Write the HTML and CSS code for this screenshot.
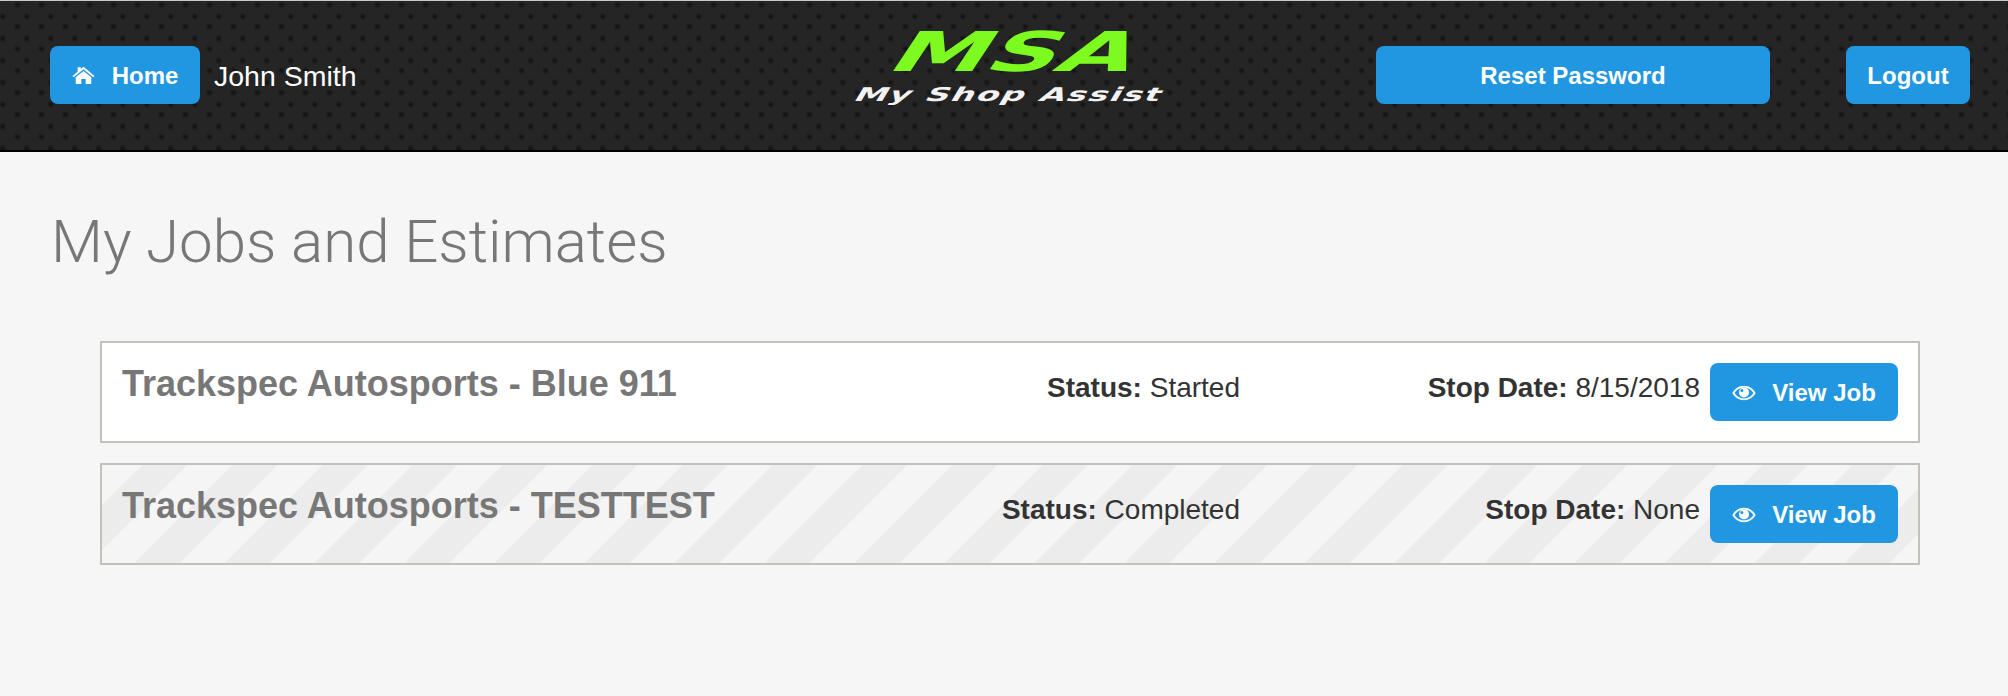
FILE: index.html
```html
<!DOCTYPE html>
<html lang="en">
<head>
<meta charset="utf-8">
<title>My Jobs and Estimates</title>
<link rel="stylesheet" href="styles.css">
</head>
<body>
<header class="topbar">
  <div class="topbar-left">
    <a class="btn btn-home"><svg class="icon icon-home" viewBox="0 0 24 20"><path d="M12 5.200 3.800 11.900V18.100a.9.9 0 0 0 .9.9H9.700v-5.400h4.600v5.400h5a.9.9 0 0 0 .9-.9V11.900z"/><path d="M12 .8 9.200 3.100V1.400H5.900v4.500L.4 10.400l1.300 1.500L12 3.400l10.300 8.500 1.300-1.500z"/></svg>Home</a>
    <span class="user">John Smith</span>
  </div>
  <div class="logo">
    <div class="logo-main">MSA</div>
    <div class="logo-sub">My Shop Assist</div>
  </div>
  <div class="topbar-right">
    <a class="btn btn-reset">Reset Password</a>
    <a class="btn btn-logout">Logout</a>
  </div>
</header>
<main class="content">
  <h1 class="page-title">My Jobs and Estimates</h1>
  <section class="jobs">
    <article class="job">
      <h2 class="job-name">Trackspec Autosports - Blue 911</h2>
      <div class="job-status"><b>Status:</b> Started</div>
      <div class="job-date"><b>Stop Date:</b> 8/15/2018</div>
      <a class="btn btn-view"><svg class="icon icon-eye" viewBox="0 0 24 16"><path fill-rule="evenodd" d="M12 .8C7 .8 2.800 3.600.3 8c2.500 4.400 6.700 7.200 11.700 7.200s9.200-2.800 11.700-7.200C21.200 3.600 17 .8 12 .8zM12 2.600c3.900 0 7.300 2.100 9.500 5.400-2.200 3.300-5.600 5.400-9.500 5.400S4.700 11.300 2.500 8C4.700 4.700 8.100 2.600 12 2.600z"/><circle cx="12" cy="7.400" r="5"/><circle class="eye-glint" cx="9.900" cy="5.500" r="1.500"/></svg>View Job</a>
    </article>
    <article class="job job-done">
      <h2 class="job-name">Trackspec Autosports - TESTTEST</h2>
      <div class="job-status"><b>Status:</b> Completed</div>
      <div class="job-date"><b>Stop Date:</b> None</div>
      <a class="btn btn-view"><svg class="icon icon-eye" viewBox="0 0 24 16"><path fill-rule="evenodd" d="M12 .8C7 .8 2.800 3.600.3 8c2.500 4.400 6.700 7.200 11.700 7.200s9.200-2.800 11.700-7.200C21.200 3.600 17 .8 12 .8zM12 2.600c3.900 0 7.300 2.100 9.500 5.400-2.200 3.300-5.600 5.400-9.500 5.400S4.700 11.300 2.500 8C4.700 4.700 8.100 2.600 12 2.600z"/><circle cx="12" cy="7.400" r="5"/><circle class="eye-glint" cx="9.900" cy="5.500" r="1.500"/></svg>View Job</a>
    </article>
  </section>
</main>
</body>
</html>
```

FILE: styles.css
```css
* { box-sizing: border-box; }
html, body { margin: 0; height: 100%; }
body {
  background: #f6f6f6;
  font-family: "Liberation Sans", Arial, sans-serif;
  color: #333;
  overflow: hidden;
}
.topbar {
  height: 152px;
  display: grid;
  grid-template-columns: 1fr auto 1fr;
  align-items: center;
  padding: 0 38px 1px 50px;
  border-top: 1px solid #c9c9c9;
  border-bottom: 2px solid #000;
  background-color: #252525;
  background-image:
    radial-gradient(circle 4px, #111 0, #141414 1px, transparent 3.800px),
    radial-gradient(circle 4px, #111 0, #141414 1px, transparent 3.800px);
  background-size: 24px 22px;
  background-position: 5.500px -7.300px, -9.300px 4.500px;
}
.topbar-left { display: flex; align-items: center; gap: 14px; }
.topbar-right { display: flex; align-items: center; justify-content: flex-end; gap: 76px; }
.btn {
  display: inline-flex;
  align-items: center;
  justify-content: center;
  height: 58px;
  padding-top: 2px;
  border-radius: 8px;
  background: #2196e1;
  color: #fff;
  font-weight: 700;
  font-size: 24px;
  white-space: nowrap;
}
.btn-home { width: 150px; }
.btn-reset { width: 394px; }
.btn-logout { width: 124px; }
.btn-view { width: 188px; flex: none; margin-top: 1px; }
.icon { fill: #fff; flex: none; }
.icon-home { width: 23px; height: 19px; margin-right: 17px; margin-top: -2px; }
.icon-eye { width: 24px; height: 16px; margin-right: 16px; }
.eye-glint { fill: #2196e1; }
.user { color: #fff; font-size: 28.500px; line-height: 34px; margin-top: 1px; }
.logo { width: 310px; text-align: center; margin-bottom: 16px; }
.logo-main {
  color: #7dfa1f;
  font-family: "DejaVu Sans", sans-serif;
  font-weight: 700;
  font-size: 55px;
  line-height: 42px;
  transform: translateX(8px) scaleX(1.770) skewX(-20.600deg);
}
.logo-sub {
  margin-top: 11px;
  color: #f2f2f2;
  font-family: "DejaVu Sans", sans-serif;
  font-weight: 700;
  font-size: 19px;
  line-height: 20px;
  letter-spacing: 1px;
  white-space: nowrap;
  transform: scaleX(1.740) skewX(-19deg);
}
.content { padding: 0 88px 0 51px; }
.page-title {
  margin: 0;
  padding-top: 50px;
  font-family: Roboto, sans-serif;
  font-weight: 300;
  font-size: 60px;
  line-height: 80px;
  color: #777;
}
.jobs {
  margin: 59px 0 0 49px;
  display: flex;
  flex-direction: column;
  gap: 20px;
}
.job {
  height: 102px;
  display: flex;
  align-items: flex-start;
  padding: 19px 20px 0;
  border: 2px solid #c4c0bc;
  background: #fff;
}
.job-done {
  background-color: #f5f5f5;
  background-image: linear-gradient(135deg, #ececec 25%, transparent 25%, transparent 50%, #ececec 50%, #ececec 75%, transparent 75%);
  background-size: 90px 90px;
  background-position: 41px 0;
}
.job-name {
  margin: 0;
  flex: 1;
  font-size: 36px;
  line-height: 43px;
  font-weight: 700;
  color: #777;
}
.job-status, .job-date {
  font-size: 28px;
  line-height: 37px;
  margin-top: 7px;
  text-align: right;
  flex: none;
}
.job-status { width: 300px; }
.job-date { width: 460px; margin-right: 10px; }
```
